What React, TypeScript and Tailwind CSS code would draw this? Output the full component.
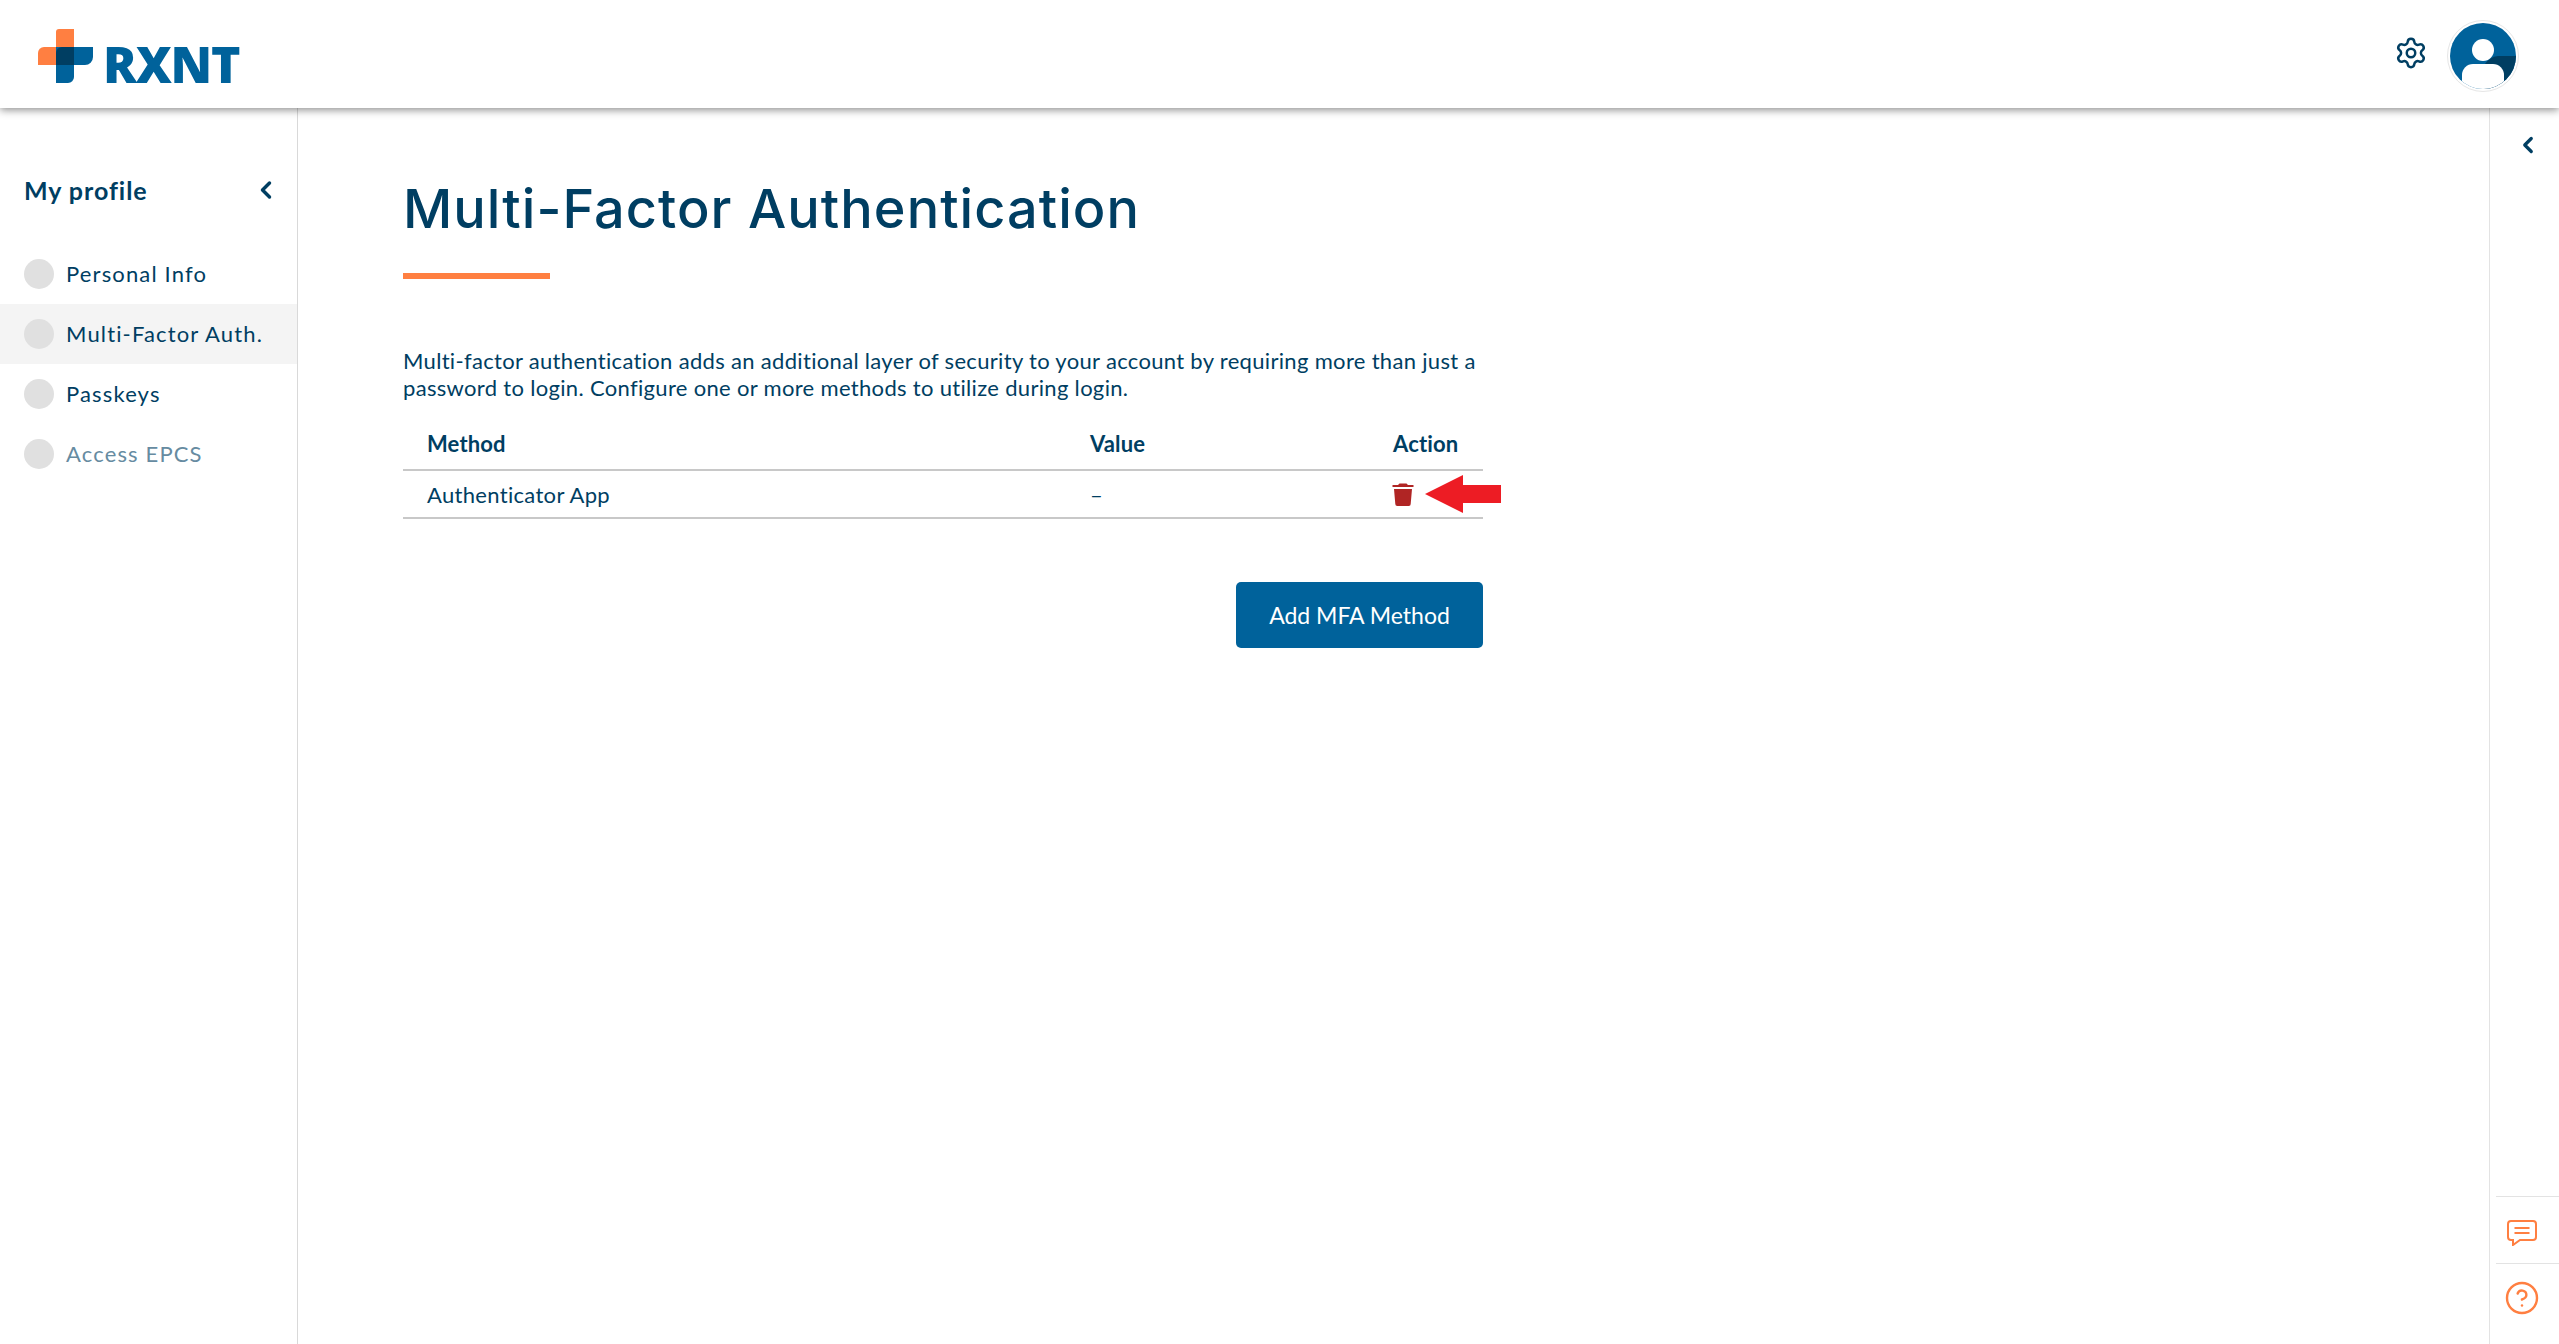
import { ChevronLeft, CircleHelp, Settings } from 'lucide-react'

const navItems = [
  { label: 'Personal Info', active: false, muted: false },
  { label: 'Multi-Factor Auth.', active: true, muted: false },
  { label: 'Passkeys', active: false, muted: false },
  { label: 'Access EPCS', active: false, muted: true },
]

function Logo() {
  return (
    <div className="flex items-center">
      <svg width="56" height="56" viewBox="0 0 56 56" className="shrink-0">
        <path d="M21 0h15v36H24a6 6 0 0 1-6-6V3a3 3 0 0 1 3-3Z" fill="#ff7f41" />
        <path d="M6 18h30v18H0V24a6 6 0 0 1 6-6Z" fill="#ff7f41" />
        <path d="M18 18h37v10a8 8 0 0 1-8 8H36v12a6 6 0 0 1-6 6H18Z" fill="#00629b" />
        <path d="M24 18h12v18H18V24a6 6 0 0 1 6-6Z" fill="#003e62" />
      </svg>
      <span className="ml-[9px] mt-[13px] font-['Open_Sans',sans-serif] text-[50px] leading-[36px] font-extrabold tracking-[-1.2px] text-[#00629b]">
        RXNT
      </span>
    </div>
  )
}

function Avatar() {
  return (
    <div className="h-[72px] w-[72px] rounded-full border border-[#e6e6e6] bg-white p-[2px]">
      <svg viewBox="0 0 66 66" className="h-full w-full">
        <defs>
          <clipPath id="avatar-clip">
            <circle cx="33" cy="33" r="33" />
          </clipPath>
        </defs>
        <g clipPath="url(#avatar-clip)">
          <rect width="66" height="66" fill="#00629b" />
          <path d="M35 41a18 18 0 0 1 13-8h18v33H35Z" fill="#003e62" />
          <circle cx="33" cy="27" r="11" fill="#fff" />
          <path d="M12 66V52a11 11 0 0 1 11-11h20a11 11 0 0 1 11 11v14Z" fill="#fff" />
        </g>
      </svg>
    </div>
  )
}

function TrashIcon() {
  return (
    <svg width="22" height="24" viewBox="0 0 22 24" className="-ml-[1px]">
      <path d="M7.5 1.5h7L16 3h5.5v2H.5V3H6Z" fill="#b02524" />
      <path d="M2 7h18l-1.3 15a2 2 0 0 1-2 2H5.3a2 2 0 0 1-2-2Z" fill="#b02524" />
    </svg>
  )
}

function ChatIcon() {
  return (
    <svg width="30" height="26" viewBox="0 0 30 26" fill="none" stroke="#ff7f41" strokeWidth="2">
      <path d="M4 1h22a3 3 0 0 1 3 3v13a3 3 0 0 1-3 3H13l-7 5v-5H4a3 3 0 0 1-3-3V4a3 3 0 0 1 3-3Z" />
      <path d="M7.5 8h15M7.5 13h15" />
    </svg>
  )
}

export default function App() {
  return (
    <div className="flex h-[1344px] w-full flex-col overflow-hidden bg-white font-['Lato',sans-serif] text-[#003e62]">
      {/* Header */}
      <header className="relative z-10 flex h-[108px] shrink-0 items-start justify-between bg-white pl-[38px] pr-[40px] shadow-[0_2px_8px_rgba(0,0,0,0.45)]">
        <div className="pt-[29px]">
          <Logo />
        </div>
        <div className="flex items-start gap-[19px] pt-[20px]">
          <Settings size={34} strokeWidth={1.75} className="mt-[16px] text-[#003e62]" />
          <Avatar />
        </div>
      </header>

      <div className="flex min-h-0 flex-1">
        {/* Sidebar */}
        <aside className="w-[298px] shrink-0 border-r border-[#d9d9d9]">
          <div className="flex items-center justify-between pl-[24px] pr-[17px] pt-[66px]">
            <span className="text-[25px] leading-[32px] font-bold tracking-[0.95px]">My profile</span>
            <ChevronLeft size={28} strokeWidth={3} />
          </div>
          <nav className="mt-[38px]">
            {navItems.map((item) => (
              <div
                key={item.label}
                className={`flex h-[60px] items-center gap-[12px] pl-[24px] ${item.active ? 'bg-[#f4f4f4]' : ''}`}
              >
                <span className="h-[30px] w-[30px] rounded-full bg-[#e0e0e0]" />
                <span className={`-mt-[2px] text-[22px] tracking-[1.15px] ${item.muted ? 'text-[#668ba1]' : ''}`}>{item.label}</span>
              </div>
            ))}
          </nav>
        </aside>

        {/* Main */}
        <main className="min-w-0 flex-1 pl-[105px] pt-[65px]">
          <h1 className="font-['Inter',sans-serif] text-[54px] leading-[72px] font-medium tracking-[1.05px]">
            Multi-Factor Authentication
          </h1>
          <div className="mt-[28px] h-[6px] w-[147px] bg-[#ff7f41]" />
          <p className="mt-[68px] w-[1085px] text-[22px] leading-[27px] tracking-[0.32px]">
            Multi-factor authentication adds an additional layer of security to your account by requiring more than just a
            password to login. Configure one or more methods to utilize during login.
          </p>
          <div className="mt-[22px] w-[1080px]">
            <div className="grid h-[48px] grid-cols-[663px_303px_1fr] items-center border-b-2 border-[#c8c8c8] pb-[5px] pl-[24px] text-[22px] font-bold tracking-[0.15px]">
              <span>Method</span>
              <span>Value</span>
              <span>Action</span>
            </div>
            <div className="grid h-[48px] grid-cols-[663px_303px_1fr] items-center border-b-2 border-[#c8c8c8] pl-[24px] text-[22px] tracking-[0.32px]">
              <span>Authenticator App</span>
              <span>–</span>
              <span className="relative flex items-center">
                <TrashIcon />
                <svg width="76" height="38" viewBox="0 0 76 38" className="absolute left-[32px] top-[-7px]">
                  <path d="M0 19 38 0v10h38v18H38v10Z" fill="#ed1c24" />
                </svg>
              </span>
            </div>
          </div>
          <div className="mt-[63px] flex w-[1080px] justify-end">
            <button className="h-[66px] w-[247px] rounded-[5px] bg-[#00629b] text-[23px] text-white">Add MFA Method</button>
          </div>
        </main>

        {/* Right rail */}
        <aside className="flex w-[70px] shrink-0 flex-col border-l border-[#e3e3e3]">
          <div className="flex justify-center pl-[6px] pt-[24px]">
            <ChevronLeft size={26} strokeWidth={3} className="text-[#003e62]" />
          </div>
          <div className="mt-auto ml-[6px]">
            <div className="flex h-[67px] items-start justify-center border-t border-[#e3e3e3] pr-[11px] pt-[23px]">
              <ChatIcon />
            </div>
            <div className="flex h-[81px] items-start justify-center border-t border-[#e3e3e3] pr-[11px] pt-[16px]">
              <CircleHelp size={36} strokeWidth={1.6} className="text-[#ff7f41]" />
            </div>
          </div>
        </aside>
      </div>
    </div>
  )
}
